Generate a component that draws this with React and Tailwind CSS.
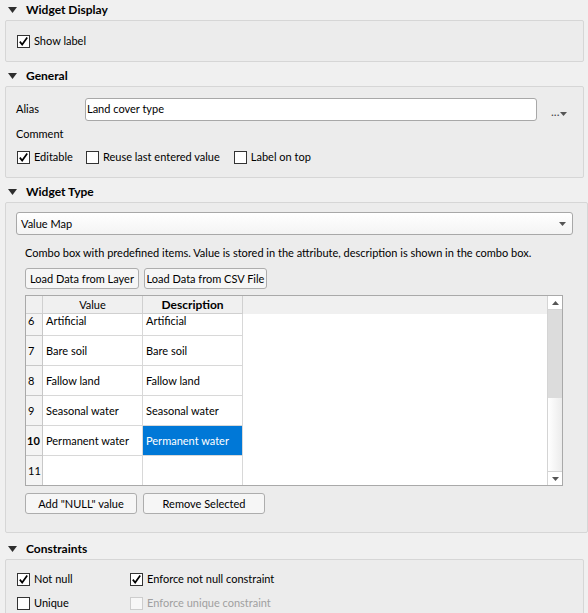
import React from "react";

function Tri() {
  return (
    <svg width="9" height="6" viewBox="0 0 9 6" className="shrink-0">
      <path d="M0 0 H9 L4.5 6 Z" fill="#2e2e2e" />
    </svg>
  );
}

function Header({ title, first }) {
  return (
    <div className={first ? "h-[20px] flex items-center pl-[8px]" : "h-[24px] pt-[3px] flex items-center pl-[8px]"}>
      <Tri />
      <span className="ml-[9px] font-bold text-[12px] text-black">{title}</span>
    </div>
  );
}

function Check({ checked, disabled }) {
  return (
    <span
      className={
        disabled
          ? "w-[13px] h-[13px] border border-[#cdcdcd] bg-[#f7f7f7] flex items-center justify-center shrink-0"
          : "w-[13px] h-[13px] border border-[#333333] bg-white flex items-center justify-center shrink-0"
      }
    >
      {checked && (
        <svg width="11" height="11" viewBox="0 0 11 11">
          <path d="M1.8 5.6 L4.2 8.6 L9.2 1.6" fill="none" stroke="#000" strokeWidth="1.7" />
        </svg>
      )}
    </span>
  );
}

function CB({ label, checked, disabled, className = "" }) {
  return (
    <div className={"flex items-center whitespace-nowrap " + className}>
      <Check checked={checked} disabled={disabled} />
      <span className={disabled ? "ml-[4px] text-[#a0a0a0]" : "ml-[4px] text-black"}>{label}</span>
    </div>
  );
}

function Btn({ children, w }) {
  return (
    <div
      className={
        "h-[21px] border border-[#adadad] rounded-[3px] bg-[#f6f6f6] flex items-center justify-center text-black shrink-0 whitespace-nowrap " + w
      }
    >
      {children}
    </div>
  );
}

const rows = [
  { n: "6", v: "Artificial", d: "Artificial" },
  { n: "7", v: "Bare soil", d: "Bare soil" },
  { n: "8", v: "Fallow land", d: "Fallow land" },
  { n: "9", v: "Seasonal water", d: "Seasonal water" },
  { n: "10", v: "Permanent water", d: "Permanent water", sel: true },
  { n: "11", v: "", d: "" },
];

function Table() {
  return (
    <div className="ml-[9px] w-[538px] h-[191px] border border-[#a9a9a9] bg-white flex">
      <div className="flex-1 flex flex-col">
        <div className="h-[18px] flex bg-[#f0f0f0] shrink-0">
          <div className="w-[17px] border-r border-b border-[#d0d0d0]" />
          <div className="w-[100px] border-r border-b border-[#d0d0d0] flex items-center justify-center">Value</div>
          <div className="w-[100px] border-r border-b border-[#d0d0d0] flex items-center justify-center font-bold text-[12px]">Description</div>
          <div className="flex-1" />
        </div>
        <div className="flex-1 overflow-hidden">
          <div className="-mt-[8px]">
            {rows.map((r) => (
              <div key={r.n} className="h-[30px] flex">
                <div
                  className={
                    r.sel
                      ? "w-[17px] border-r border-b border-[#c8c8c8] bg-[#f4f4f4] flex items-center pl-[1px] font-bold"
                      : "w-[17px] border-r border-b border-[#c8c8c8] bg-[#f4f4f4] flex items-center pl-[2px]"
                  }
                >
                  {r.n}
                </div>
                <div className="w-[100px] border-r border-b border-[#d8d8d8] flex items-center pl-[3px] whitespace-nowrap overflow-hidden">
                  {r.v}
                </div>
                <div
                  className={
                    r.sel
                      ? "w-[100px] border-r border-b border-[#d8d8d8] flex items-center pl-[3px] bg-[#0078d7] text-white whitespace-nowrap overflow-hidden"
                      : "w-[100px] border-r border-b border-[#d8d8d8] flex items-center pl-[3px] whitespace-nowrap overflow-hidden"
                  }
                >
                  {r.d}
                </div>
              </div>
            ))}
          </div>
        </div>
      </div>
      <div className="w-[15px] border-l border-[#d4d4d4] flex flex-col bg-[#f0f0f0]">
        <div className="h-[14px] flex items-center justify-center bg-white border-b border-[#d4d4d4]">
          <svg width="7" height="4" viewBox="0 0 7 4"><path d="M0 4 H7 L3.5 0 Z" fill="#555" /></svg>
        </div>
        <div className="h-[88px] bg-[#dcdcdc]" />
        <div className="flex-1 bg-gradient-to-r from-[#ffffff] to-[#ececec]" />
        <div className="h-[14px] flex items-center justify-center bg-white border-t border-[#d4d4d4]">
          <svg width="7" height="4" viewBox="0 0 7 4"><path d="M0 0 H7 L3.5 4 Z" fill="#555" /></svg>
        </div>
      </div>
    </div>
  );
}

export default function App() {
  return (
    <div className="w-[588px] h-[613px] overflow-hidden bg-[#f0f0f0] font-['Lato',sans-serif] text-[11px] leading-[16px] text-black">
      <Header title="Widget Display" first />
      <div className="ml-[5px] w-[579px] h-[42px] border border-[#d6d6d6] rounded-[2px] bg-[#ececec] pl-[11px] flex items-center">
        <CB label="Show label" checked />
      </div>

      <Header title="General" />
      <div className="ml-[5px] w-[579px] h-[92px] border border-[#d6d6d6] rounded-[2px] bg-[#ececec] pt-[10px] pl-[10px]">
        <div className="h-[24px] flex items-center">
          <span className="w-[69px]">Alias</span>
          <div className="w-[452px] h-[23px] border border-[#a8a8a8] rounded-[3px] bg-white flex items-center pl-[1px]">
            Land cover type
          </div>
          <div className="ml-[14px] flex items-end pt-[6px]">
            <span className="leading-[10px] text-[#444] text-[12px]">...</span>
            <svg width="7" height="4" viewBox="0 0 7 4" className="mb-[1px]"><path d="M0 0 H7 L3.5 4 Z" fill="#555" /></svg>
          </div>
        </div>
        <div className="h-[26px] flex items-center">Comment</div>
        <div className="h-[20px] flex items-center pl-[1px]">
          <CB label="Editable" checked />
          <CB label="Reuse last entered value" className="ml-[13px]" />
          <CB label="Label on top" className="ml-[14px]" />
        </div>
      </div>

      <Header title="Widget Type" />
      <div className="ml-[5px] w-[583px] h-[331px] border border-[#d6d6d6] rounded-[2px] bg-[#ececec] pt-[9px] pl-[10px]">
        <div className="w-[557px] h-[23px] border border-[#a8a8a8] rounded-[3px] bg-gradient-to-b from-[#ffffff] to-[#f4f4f4] flex items-center pl-[4px] pr-[6px] justify-between">
          <span>Value Map</span>
          <svg width="7" height="4" viewBox="0 0 7 4"><path d="M0 0 H7 L3.5 4 Z" fill="#555" /></svg>
        </div>
        <div className="h-[33px] pt-[10px] ml-[9px] whitespace-nowrap">
          Combo box with predefined items. Value is stored in the attribute, description is shown in the combo box.
        </div>
        <div className="ml-[9px] flex gap-[5px]">
          <Btn w="w-[114px]">Load Data from Layer</Btn>
          <Btn w="w-[123px]">Load Data from CSV File</Btn>
        </div>
        <div className="h-[6px]" />
        <Table />
        <div className="ml-[9px] mt-[7px] flex gap-[6px]">
          <Btn w="w-[112px]">Add "NULL" value</Btn>
          <Btn w="w-[122px]">Remove Selected</Btn>
        </div>
      </div>

      <div className="h-[26px] pt-[5px] flex items-center pl-[8px]">
        <Tri />
        <span className="ml-[9px] font-bold text-[12px]">Constraints</span>
      </div>
      <div className="ml-[5px] w-[579px] h-[80px] border border-[#d6d6d6] rounded-[2px] bg-[#ececec] pl-[11px] pt-[11px]">
        <div className="h-[16px] flex items-center">
          <CB label="Not null" checked className="w-[113px]" />
          <CB label="Enforce not null constraint" checked />
        </div>
        <div className="h-[8px]" />
        <div className="h-[16px] flex items-center">
          <CB label="Unique" className="w-[113px]" />
          <CB label="Enforce unique constraint" disabled />
        </div>
      </div>
    </div>
  );
}
